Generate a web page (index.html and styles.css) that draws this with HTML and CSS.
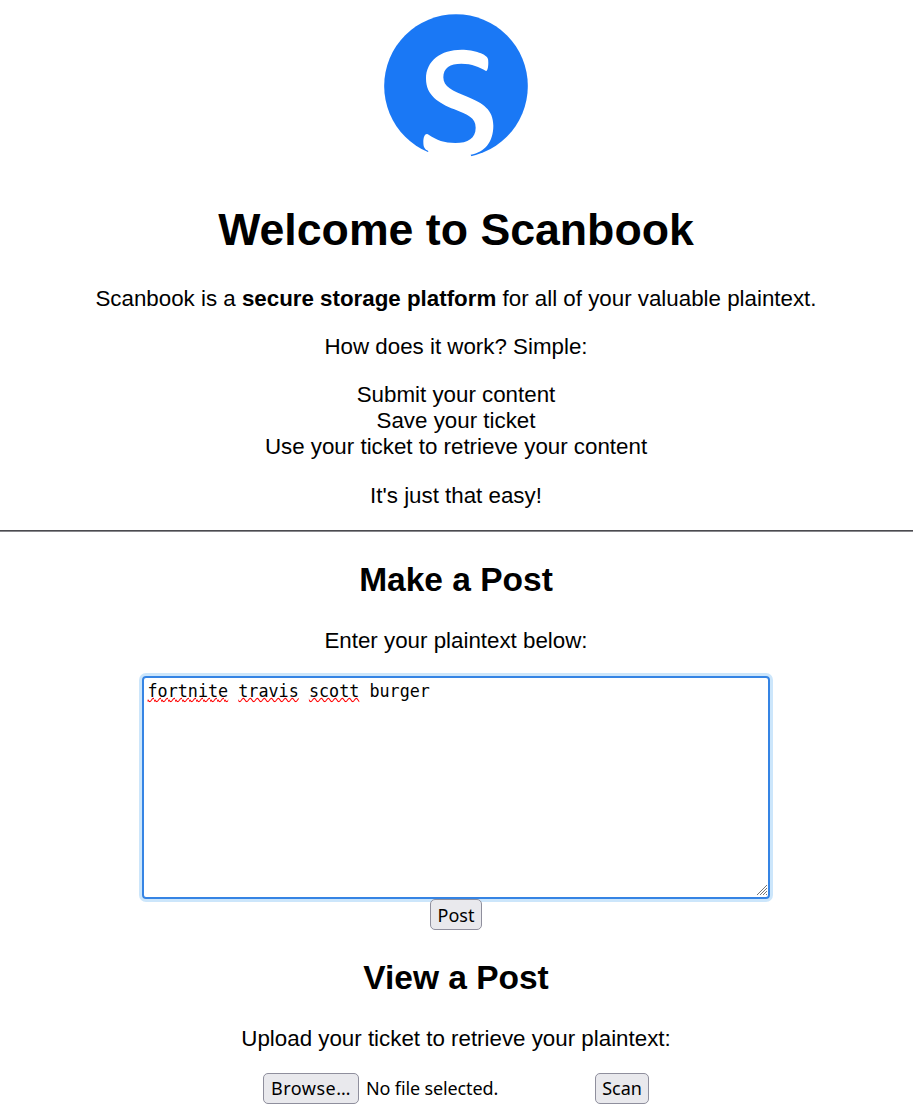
FILE: index.html
```
<!DOCTYPE html>
<html lang="en">
<head>
<meta charset="utf-8">
<title>Scanbook</title>
<link rel="stylesheet" href="styles.css">
</head>
<body>
<header class="intro">
  <svg class="logo" viewBox="24 24 432 432" role="img" aria-label="Scanbook logo">
    <circle cx="240" cy="240" r="215.5" fill="#1a78f5"/>
    <path fill="#fff" d="M330 195C337 196 338 168 336 159C334 145 294 131 257 131C194 131 150 164 150 218C150 268 188 291 235 310C275 327 299 334 299 365C299 396 276 411 238 411C205 411 181 402 159 387C149 379 142 390 142 408C142 424 146 430 157 435L150 460H290L284 446C326 439 352 408 352 359C352 311 321 291 274 272C229 254 202 243 202 214C202 186 222 173 256 173C289 173 309 183 330 195Z"/>
  </svg>
  <h1 class="title">Welcome to Scanbook</h1>
  <p class="text">Scanbook is a <b>secure storage platform</b> for all of your valuable plaintext.</p>
  <p class="text">How does it work? Simple:</p>
  <ul class="steps">
    <li>Submit your content</li>
    <li>Save your ticket</li>
    <li>Use your ticket to retrieve your content</li>
  </ul>
  <p class="text closing">It's just that easy!</p>
</header>
<hr class="rule">
<section class="post">
  <h2 class="heading">Make a Post</h2>
  <p class="text">Enter your plaintext below:</p>
  <div class="editor"><div class="entry"><span class="typo">fortnite</span> <span class="typo">travis</span> <span class="typo">scott</span> burger</div><svg class="grip" viewBox="0 0 12 12"><path d="M1 11L11 1M4 11L11 4M7 11L11 7M10 11L11 10" fill="none" stroke="#777" stroke-width="1"/></svg></div>
  <button class="button button-post">Post</button>
</section>
<section class="view">
  <h2 class="heading">View a Post</h2>
  <p class="text">Upload your ticket to retrieve your plaintext:</p>
  <div class="upload">
    <button class="button button-browse">Browse…</button>
    <span class="filename">No file selected.</span>
    <button class="button button-scan">Scan</button>
  </div>
</section>
</body>
</html>
```
FILE: styles.css
```
* { box-sizing: border-box; }
body {
  margin: 0;
  height: 1110px;
  overflow: hidden;
  background: #fff;
  color: #000;
  font: 22.333px/26px "Liberation Sans", Arial, sans-serif;
  text-align: center;
}
.intro { padding-top: 14px; width: 912px; }
.post, .view { width: 912px; }
.logo { display: block; width: 144px; height: 144px; margin: 0 auto 46px; }
.title { margin: 0 0 31px; font-size: 44.667px; line-height: 51px; }
.text { margin: 0 0 22px; }
.steps { margin: 0 0 23px; padding: 0; list-style: none; }
.intro .closing { margin-bottom: 21px; }
.rule { margin: 0; height: 2px; border: 0; border-top: 1px solid #4b4b4f; background: #88888c; }
.heading { margin: 0; padding: 29px 0; font-size: 33.5px; line-height: 38px; }
.post .text { margin-bottom: 22px; }
.editor {
  position: relative;
  width: 628px;
  height: 223px;
  margin: 0 auto;
  padding: 3px 3.5px;
  border: 2px solid #3584e4;
  border-radius: 4px;
  box-shadow: 0 0 0 3px #cce6fb;
  text-align: left;
}
.entry {
  font: 16.75px/20px "DejaVu Sans Mono", monospace;
  transform: scaleY(1.1);
  transform-origin: 0 16px;
}
.typo {
  text-decoration: underline wavy #f00 1.2px;
  text-decoration-skip-ink: none;
  text-underline-offset: 0;
}
.grip { position: absolute; right: 0; bottom: 1px; width: 12px; height: 12px; }
.button {
  display: block;
  height: 31px;
  padding: 0;
  border: 1px solid #8f8f9d;
  border-radius: 5px;
  background: #e9e9ed;
  color: #000;
  font: 18px/28px "Noto Sans", sans-serif;
}
.button-post { position: relative; width: 52px; margin: 0 auto; }
.view .text { margin-bottom: 21px; }
.upload { display: flex; width: 386px; margin: 0 auto; }
.button-browse { width: 96px; padding-bottom: 1px; letter-spacing: 0.5px; }
.filename {
  margin-left: 7px;
  font: 18px/30px "Noto Sans", sans-serif;
  letter-spacing: -0.13px;
  white-space: nowrap;
}
.button-scan { width: 54px; margin-left: auto; padding-bottom: 1px; }
```
